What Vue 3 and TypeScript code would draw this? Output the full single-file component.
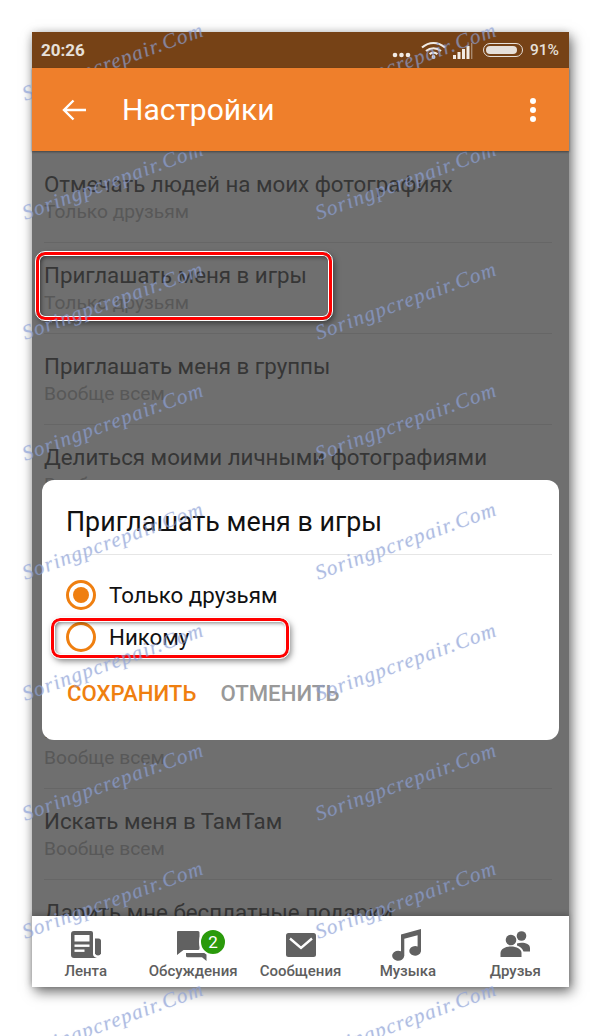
<script setup lang="ts">
// Строки списка настроек за диалогом
interface SettingRow {
  title: string;
  value: string;
}

const rows: SettingRow[] = [
  { title: "Отмечать людей на моих фотографиях", value: "Только друзьям" },
  { title: "Приглашать меня в игры", value: "Только друзьям" },
  { title: "Приглашать меня в группы", value: "Вообще всем" },
  { title: "Делиться моими личными фотографиями", value: "Вообще всем" },
  { title: "Показывать мои игры", value: "Вообще всем" },
  { title: "Показывать мои группы", value: "Вообще всем" },
  { title: "Моя лента", value: "Вообще всем" },
  { title: "Искать меня в ТамТам", value: "Вообще всем" },
  { title: "Дарить мне бесплатные подарки", value: "Вообще всем" },
];

const marks: { x: number; y: number }[] = [];
for (const y of [62, 181, 301, 422, 541, 662, 782, 900, 1021]) {
  marks.push({ x: 113, y });
  marks.push({ x: 406, y });
}
</script>

<template>
  <div class="page">
    <div class="phone">
      <div class="status">
        <span class="clock">20:26</span>
        <div class="status-icons">
          <svg class="s-dots" width="19" height="6" viewBox="0 0 19 6">
            <circle cx="3" cy="3" r="2.3" />
            <circle cx="9.5" cy="3" r="2.3" />
            <circle cx="16" cy="3" r="2.3" />
          </svg>
          <svg class="s-wifi" width="27" height="18" viewBox="0 0 27 18">
            <path d="M2 6.5C9 0.5 18 0.5 25 6.5M6 10C10.5 6.3 16.5 6.3 21 10M9.6 13.2C12 11.3 15 11.3 17.4 13.2" fill="none" stroke="#f1ebe5" stroke-width="2.2" />
            <circle cx="13.5" cy="16" r="1.9" fill="#f1ebe5" />
          </svg>
          <svg class="s-signal" width="20" height="16" viewBox="0 0 20 16">
            <rect x="0" y="12" width="3" height="4" fill="#f1ebe5" />
            <rect x="4.5" y="9" width="3" height="7" fill="#f1ebe5" />
            <rect x="9" y="6" width="3" height="10" fill="#f1ebe5" />
            <rect x="13.5" y="3" width="3" height="13" fill="#f1ebe5" />
            <rect x="18" y="0" width="1.4" height="16" fill="#a98a6f" />
          </svg>
          <div class="battery"><div class="battery-fill"></div></div>
          <span class="percent">91%</span>
        </div>
      </div>

      <div class="toolbar">
        <svg class="back" width="24" height="22" viewBox="0 0 24 22">
          <path d="M24 11H2M11.5 1.5L2 11l9.5 9.5" fill="none" stroke="#fff" stroke-width="2.4" />
        </svg>
        <span class="toolbar-title">Настройки</span>
        <svg class="more" width="8" height="26" viewBox="0 0 8 26">
          <circle cx="4" cy="4" r="3" />
          <circle cx="4" cy="13" r="3" />
          <circle cx="4" cy="22" r="3" />
        </svg>
      </div>

      <div class="content">
        <div v-for="row in rows" :key="row.title" class="row">
          <div class="row-title">{{ row.title }}</div>
          <div class="row-value">{{ row.value }}</div>
        </div>

        <div class="dialog">
          <div class="dialog-title">Приглашать меня в игры</div>
          <div class="options">
            <div class="option">
              <span class="radio checked"></span>
              <span>Только друзьям</span>
            </div>
            <div class="option">
              <span class="radio"></span>
              <span>Никому</span>
            </div>
          </div>
          <div class="actions">
            <span class="save">СОХРАНИТЬ</span>
            <span class="cancel">ОТМЕНИТЬ</span>
          </div>
        </div>
      </div>

      <div class="nav">
        <div class="nav-item">
          <svg width="36" height="32" viewBox="0 0 36 32">
            <path d="M6 2h17a2 2 0 0 1 2 2v21c0 2 1.2 3 2.6 3.4L29 29H6a3 3 0 0 1-3-3V5a3 3 0 0 1 3-3z" />
            <path d="M27 9.5h3.5a2.5 2.5 0 0 1 2.5 2.5v12.5a3.2 3.2 0 0 1-6 0z" />
            <rect x="6.5" y="6" width="15" height="6.5" fill="#fff" />
            <rect x="6.5" y="15.5" width="15" height="2.4" fill="#fff" />
            <rect x="6.5" y="20.5" width="10" height="2.4" fill="#fff" />
          </svg>
          <span>Лента</span>
        </div>
        <div class="nav-item">
          <div class="icon-wrap">
            <svg width="36" height="32" viewBox="0 0 36 32">
              <path d="M3 2h20a1.5 1.5 0 0 1 1.500 1.500V19.500A1.500 1.500 0 0 1 23 21H8.500L2 26V3a1 1 0 0 1 1-1z" />
              <path d="M11 24h20.500v8l-4.500-3.800H12.500a1.500 1.500 0 0 1-1.500-1.500z" />
            </svg>
            <span class="badge">2</span>
          </div>
          <span>Обсуждения</span>
        </div>
        <div class="nav-item">
          <svg width="36" height="32" viewBox="0 0 36 32">
            <rect x="3" y="4" width="30" height="24" rx="2.500" />
            <path d="M7 9.500L18 19l11-9.500" fill="none" stroke="#fff" stroke-width="2.400" />
          </svg>
          <span>Сообщения</span>
        </div>
        <div class="nav-item">
          <svg width="36" height="32" viewBox="0 0 36 32">
            <path d="M11 5.500L31 0v22.500h-.1a5.800 4.800 0 1 1-3.300-5V6.200L14.300 9.800V27h-.1a6 5 0 1 1-3.200-4.700z" />
          </svg>
          <span>Музыка</span>
        </div>
        <div class="nav-item">
          <svg width="36" height="32" viewBox="0 0 36 32">
            <circle cx="14" cy="11" r="5.300" />
            <circle cx="24.500" cy="7" r="4.800" />
            <path d="M3.500 28v-4c0-4 5-6.500 10.500-6.500S24.500 20 24.500 24v4z" />
            <path d="M20 14.500c5-1.500 13-.5 13 4.500v3.500h-6.500c-1-3-3.500-5-6.500-6z" />
          </svg>
          <span>Друзья</span>
        </div>
      </div>
    </div>

    <div class="callout callout-row"></div>
    <div class="callout callout-option"></div>

    <span
      v-for="(m, i) in marks"
      :key="i"
      class="mark"
      :style="{ left: m.x + 'px', top: m.y + 'px' }"
    >Soringpcrepair.Com</span>
  </div>
</template>

<style scoped>
.page {
  position: relative;
  width: 601px;
  height: 1036px;
  padding: 32px;
  box-sizing: border-box;
  overflow: hidden;
  background: #fff;
  font-family: Roboto, "Liberation Sans", sans-serif;
}

.phone {
  width: 537px;
  height: 955px;
  display: flex;
  flex-direction: column;
  box-shadow: 3px 5px 12px rgba(0, 0, 0, 0.55), -1px 0 8px rgba(0, 0, 0, 0.12);
}

.status {
  height: 36px;
  flex-shrink: 0;
  display: flex;
  align-items: center;
  justify-content: space-between;
  padding: 0 10px 0 9px;
  background: #764216;
  color: #e6e0da;
  font-size: 17px;
  font-weight: 700;
}

.status-icons {
  display: flex;
  align-items: center;
}

.s-dots {
  fill: #f1ebe5;
  margin-top: 9px;
  margin-right: 9px;
}

.s-signal {
  margin-left: 6px;
  margin-top: 2px;
}

.battery {
  width: 40px;
  height: 14px;
  margin-left: 10px;
  padding: 2px;
  box-sizing: border-box;
  border: 1.5px solid #e6e0da;
  border-radius: 8px;
  margin-right: 7px;
}

.battery-fill {
  width: 91%;
  height: 100%;
  background: #e6e0da;
  border-radius: 4px;
}

.percent {
  font-size: 15.5px;
  font-weight: 500;
}

.toolbar {
  height: 83px;
  flex-shrink: 0;
  display: flex;
  align-items: center;
  padding: 0 32px 0 30px;
  background: #ef7f2b;
  color: #fff;
  position: relative;
  z-index: 1;
  box-shadow: 0 1px 2px rgba(0, 0, 0, 0.4);
}

.toolbar-title {
  flex: 1;
  margin-left: 36px;
  font-size: 30px;
}

.more {
  fill: #fff;
}

.content {
  position: relative;
  flex: 1;
  min-height: 0;
  padding-top: 1px;
  overflow: hidden;
  background: #6f6f6f;
}

.row {
  margin: 0 17px 0 12px;
  padding-top: 18px;
  height: 72px;
  border-bottom: 1px solid #666;
}

.row-title {
  font-size: 22.3px;
  line-height: 28px;
  color: #363636;
  white-space: nowrap;
}

.row-value {
  font-size: 19.2px;
  line-height: 28px;
  color: #585858;
  white-space: nowrap;
}

.dialog {
  position: absolute;
  left: 10px;
  top: 329px;
  width: 517px;
  height: 260px;
  border-radius: 12px;
  background: #fff;
  color: #111;
}

.dialog-title {
  margin: 0 7px 0 24px;
  padding: 24px 0 14px;
  font-size: 26.8px;
  line-height: 36px;
  border-bottom: 1px solid #e6e6e6;
}

.options {
  margin-top: 19px;
  padding-left: 24px;
}

.option {
  height: 42px;
  display: flex;
  align-items: center;
  gap: 13px;
  font-size: 22.3px;
}

.radio {
  width: 30px;
  height: 30px;
  box-sizing: border-box;
  border: 3px solid #ef7f10;
  border-radius: 50%;
  display: flex;
  align-items: center;
  justify-content: center;
}

.radio.checked::after {
  content: "";
  width: 16px;
  height: 16px;
  border-radius: 50%;
  background: #ef7f10;
}

.actions {
  margin-top: 20px;
  padding-left: 25px;
  display: flex;
  gap: 24px;
  font-size: 22.2px;
  font-weight: 500;
  line-height: 30px;
}

.save {
  color: #ef7f10;
}

.cancel {
  color: #999;
}

.nav {
  height: 71px;
  flex-shrink: 0;
  display: flex;
  position: relative;
  background: #fff;
  box-shadow: 0 -2px 5px rgba(0, 0, 0, 0.2);
}

.nav-item {
  flex: 1;
  display: flex;
  flex-direction: column;
  align-items: center;
  padding-top: 13px;
  font-size: 15px;
  font-weight: 500;
  line-height: 20px;
  color: #5e5e5e;
}

.nav-item svg {
  display: block;
  fill: #616161;
}

.icon-wrap {
  position: relative;
}

.badge {
  position: absolute;
  left: 24px;
  top: -1px;
  width: 24px;
  height: 24px;
  border-radius: 50%;
  box-sizing: content-box;
  border: 2px solid #fff;
  background: #2a9a0b;
  color: #fff;
  font-size: 17px;
  font-weight: 400;
  line-height: 24px;
  text-align: center;
}

.callout {
  position: absolute;
  box-sizing: border-box;
  border: 3px solid #f00;
  border-radius: 9px;
  outline: 1px solid #fff;
  box-shadow: 2px 3px 6px rgba(0, 0, 0, 0.5), inset 0 0 0 1px #fff, inset 2px 2px 4px rgba(0, 0, 0, 0.5);
}

.callout-row {
  left: 36px;
  top: 252px;
  width: 296px;
  height: 68px;
}

.callout-option {
  left: 51px;
  top: 618px;
  width: 238px;
  height: 40px;
}

.mark {
  position: absolute;
  transform: translate(-50%, -50%) rotate(-20deg);
  font-family: "Liberation Serif", serif;
  font-style: italic;
  font-size: 21px;
  letter-spacing: 1.2px;
  white-space: nowrap;
  color: rgba(140, 160, 215, 0.55);
  text-shadow: 0 0 1px rgba(140, 160, 215, 0.4);
  pointer-events: none;
}
</style>

<style>
html,
body {
  margin: 0;
  background: #fff;
}
</style>
